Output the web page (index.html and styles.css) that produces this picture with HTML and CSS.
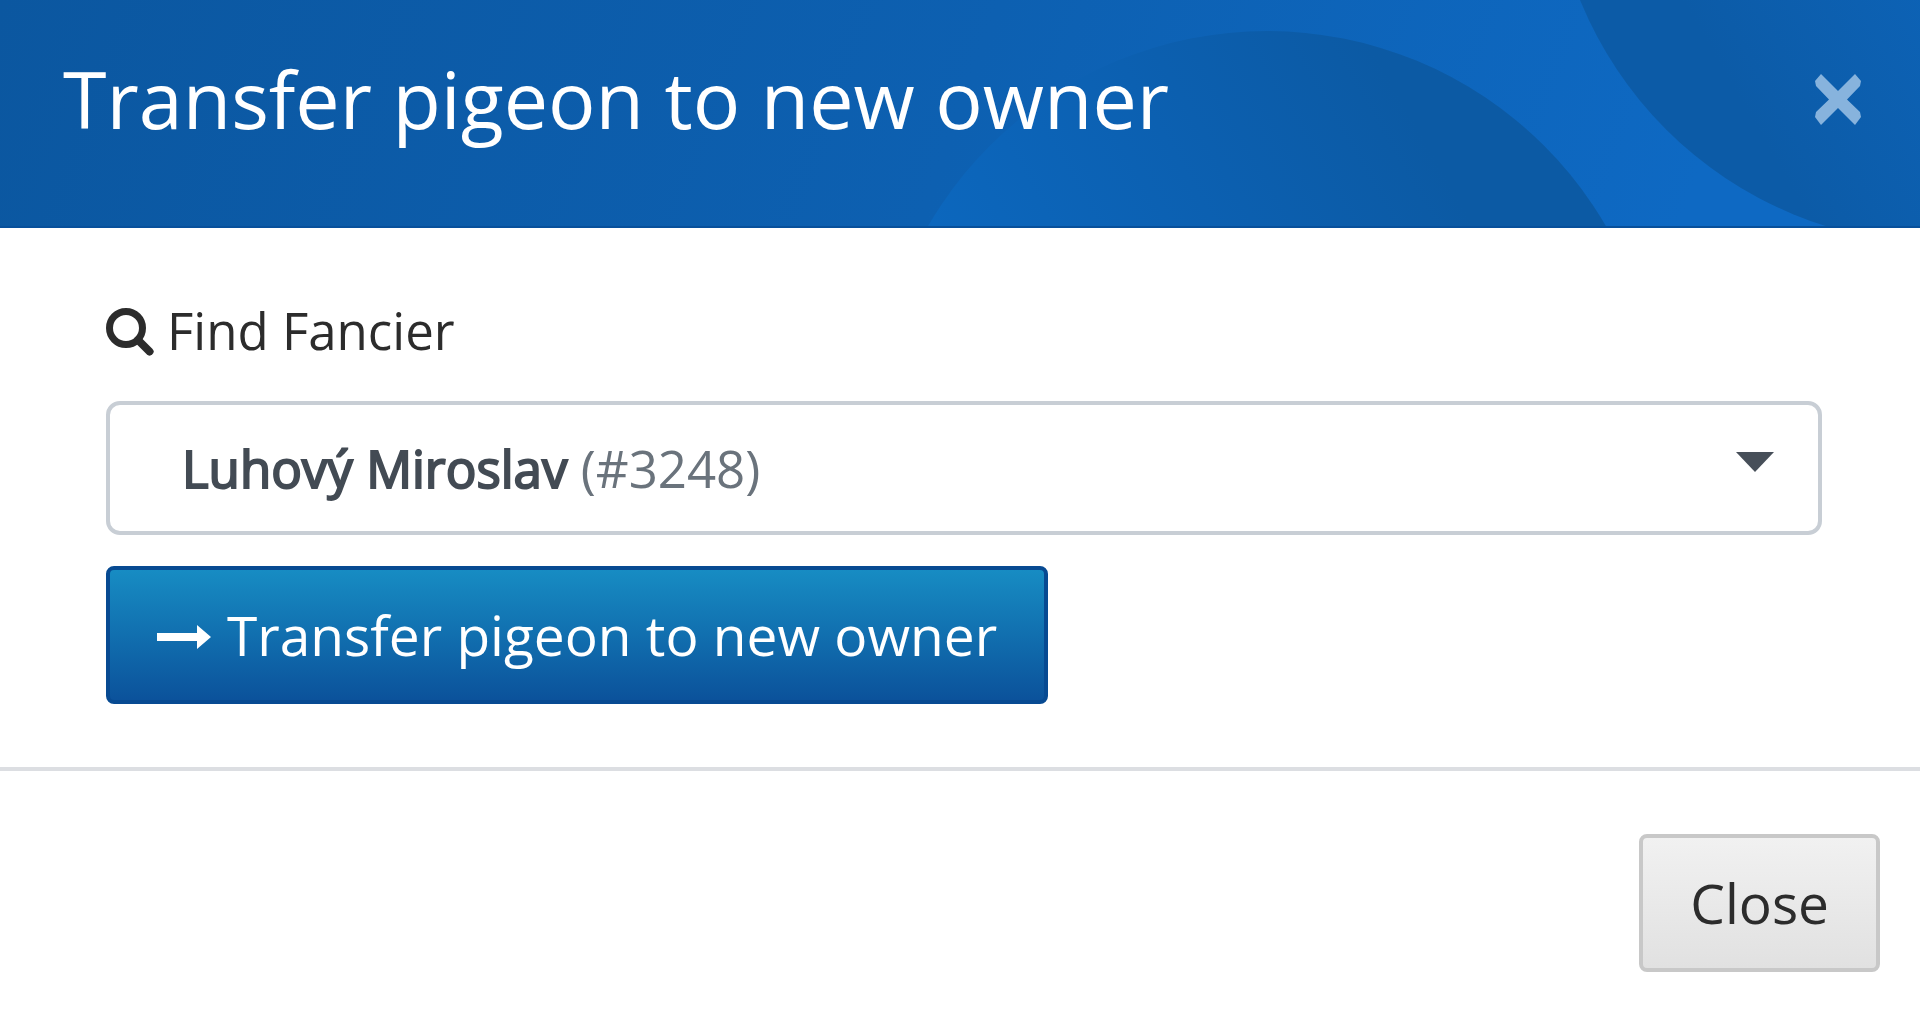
FILE: index.html
```
<!DOCTYPE html>
<html lang="en">
<head>
  <meta charset="UTF-8" />
  <meta name="viewport" content="width=device-width, initial-scale=1.0" />
  <title>Transfer pigeon to new owner</title>
  <link rel="stylesheet" href="styles.css">
</head>
<body>
  <div class="modal" role="dialog" aria-labelledby="modal-title">
    <header class="modal-header">
      <h1 class="modal-title" id="modal-title">Transfer pigeon to new owner</h1>
      <button type="button" class="modal-x" aria-label="Close dialog">
        <svg width="46" height="51" viewBox="0 0 46 51"><path d="M6 0 23 17 40 0 46 7 45 12 32 25.500 45 38 46 43 40 51 23 34 6 51 0 43 1 38 14 25.500 1 12 0 7z" fill="currentColor"/></svg>
      </button>
    </header>

    <form class="modal-body">
      <label class="field-label" for="fancier">
        <svg width="48" height="52" viewBox="0 0 48 52" fill="none" stroke="currentColor"><circle cx="20" cy="24" r="16.500" stroke-width="7"/><path d="M32 36 43.500 47.500" stroke-width="8" stroke-linecap="round"/></svg>
        Find Fancier
      </label>
      <select class="fancier-select" id="fancier">
        <button type="button"><selectedcontent></selectedcontent></button>
        <option value="3248" selected><span class="fancier-name">Luhový Miroslav</span> <span class="fancier-id">(#3248)</span></option>
      </select>
      <button type="submit" class="btn btn-primary">
        <svg width="54" height="28" viewBox="0 0 54 28" fill="currentColor"><path d="M0 12H40V4L54 16 40 28V20H0z"/></svg>
        Transfer pigeon to new owner
      </button>
    </form>

    <footer class="modal-footer">
      <button type="button" class="btn btn-default">Close</button>
    </footer>
  </div>
</body>
</html>
```
FILE: styles.css
```
* {
  box-sizing: border-box;
}

body {
  margin: 0;
  background: #fff;
  color: #2c2c2c;
  font-family: "Open Sans", sans-serif;
}

svg {
  flex: none;
}

/* Header */
.modal-header {
  position: relative;
  display: flex;
  justify-content: space-between;
  align-items: center;
  padding: 39px 59px 67px 63px;
  overflow: hidden;
  border-bottom: 2px solid #08509b;
  background: linear-gradient(110deg, #0b57a0, #0d60b1 50%, #0e69c3 88%);
}

.modal-header::before,
.modal-header::after {
  content: "";
  position: absolute;
  width: 784px;
  height: 784px;
  border-radius: 50%;
}

.modal-header::before {
  top: 31px;
  right: 261px;
  background: linear-gradient(60deg, #0c69c1 25%, #0c60b1 55%, #0c5aa4 76%);
}

.modal-header::after {
  top: -540px;
  right: -415px;
  background: linear-gradient(60deg, #0c5ba7 22%, #0d67bf 56%);
}

.modal-title {
  position: relative;
  z-index: 1;
  margin: 0;
  color: #fff;
  font-size: 79px;
  font-weight: 400;
  line-height: 120px;
}

.modal-x {
  position: relative;
  z-index: 1;
  display: flex;
  padding: 0;
  border: 0;
  background: none;
  color: #87b3dd;
  cursor: pointer;
}

/* Body */
.modal-body {
  display: flex;
  flex-direction: column;
  align-items: flex-start;
  padding: 66px 98px 63px 106px;
}

.field-label {
  display: flex;
  align-items: center;
  gap: 13px;
  margin-bottom: 35px;
  font-size: 51px;
  line-height: 72px;
}

.fancier-select,
.fancier-select::picker(select) {
  appearance: base-select;
}

.fancier-select {
  display: flex;
  align-items: center;
  justify-content: space-between;
  width: 100%;
  height: 134px;
  margin: 0 0 31px;
  padding: 0 44px 0 72px;
  border: 4px solid #c8ced5;
  border-radius: 14px;
  background: #fff;
  color: #6a737c;
  font: 51px/72px "Open Sans", sans-serif;
}

.fancier-select::picker-icon {
  content: "";
  width: 38px;
  height: 20px;
  margin-bottom: 12px;
  background: #474f59;
  clip-path: polygon(0 0, 100% 0, 50% 100%);
}

.fancier-name {
  color: #434b54;
  -webkit-text-stroke: 2px #434b54;
}

.btn {
  display: flex;
  align-items: center;
  gap: 16px;
  height: 138px;
  padding: 0 47px;
  border: 4px solid;
  border-radius: 8px;
  font: 55px/76px "Open Sans", sans-serif;
  cursor: pointer;
}

.btn-primary {
  border-color: #074a92;
  background: linear-gradient(#178cc3, #0b529b);
  color: #fff;
}

.btn-default {
  border-color: #c8c8c8;
  background: linear-gradient(#f1f1f1, #e1e1e1);
  color: #2c2c2c;
}

/* Footer */
.modal-footer {
  display: flex;
  justify-content: flex-end;
  padding: 63px 40px 44px;
  border-top: 4px solid #dcdee2;
}
```
